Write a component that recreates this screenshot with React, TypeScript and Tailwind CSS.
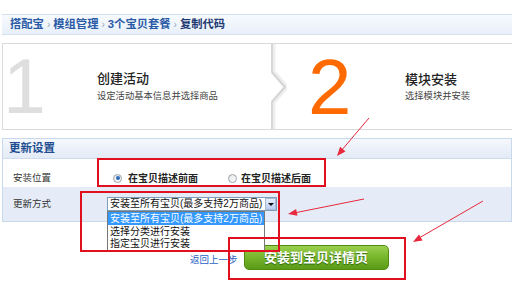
import React from "react";

function Sep() {
  return <span className="mx-[3px] text-[10px] font-normal text-[#9aa6b8]">›</span>;
}

function Radio({ checked }: { checked?: boolean }) {
  return (
    <span className="w-[9px] h-[9px] rounded-full border border-[#9aa3ad] bg-gradient-to-br from-[#e4e4e4] to-[#ffffff] flex items-center justify-center shrink-0">
      {checked ? <span className="w-[4px] h-[4px] rounded-full bg-[#2b6bbd]" /> : null}
    </span>
  );
}

export default function App() {
  return (
    <div className="relative w-[512px] h-[282px] overflow-hidden bg-white font-['Liberation_Sans','Noto_Sans_CJK_SC',sans-serif]">
      {/* breadcrumb */}
      <div className="pt-[14px] pl-[2px]">
        <div className="h-[21px] border-t border-b border-t-[#d3e1ee] border-b-[#d6e2f2] bg-gradient-to-b from-[#f7fafd] to-[#e8f0fa] flex items-center pl-[8px] text-[11.3px] font-bold text-[#2a5aa6] leading-none">
          <span>搭配宝</span>
          <Sep />
          <span>模组管理</span>
          <Sep />
          <span>3个宝贝套餐</span>
          <Sep />
          <span className="text-[#1d3a72]">复制代码</span>
        </div>
      </div>

      {/* steps */}
      <div className="mt-[8px] ml-[2px] h-[87px] border-t border-b border-l border-[#dadada] flex">
        <div className="w-[268px] flex items-center">
          <div className="w-[94px] text-[77px] leading-none text-[#dedede] font-['Liberation_Sans',sans-serif]">1</div>
          <div className="flex flex-col">
            <div className="text-[13px] leading-[16px] text-[#222] font-medium">创建活动</div>
            <div className="mt-[3px] text-[9.3px] leading-[12px] text-[#444]">设定活动基本信息并选择商品</div>
          </div>
        </div>
        <svg width="16" height="85" viewBox="0 0 16 85" className="shrink-0">
          <polyline points="2,0 2,28 15,43 2,58 2,85" fill="none" stroke="#eeeeee" strokeWidth="5" />
          <polyline points="1,0 1,28 14,43 1,58 1,85" fill="none" stroke="#cfcfcf" strokeWidth="1.5" />
        </svg>
        <div className="flex-1 flex items-center pl-[21px]">
          <div className="w-[97px] text-[78px] leading-none text-[#ff6a00] font-['Liberation_Sans',sans-serif]">2</div>
          <div className="flex flex-col">
            <div className="text-[13px] leading-[16px] text-[#222] font-medium">模块安装</div>
            <div className="mt-[2px] text-[9.3px] leading-[12px] text-[#444]">选择模块并安装</div>
          </div>
        </div>
      </div>

      {/* settings section */}
      <div className="mt-[8px] ml-[2px] border border-[#c9d8eb]">
        <div className="h-[20px] border-b border-[#cfdcee] bg-gradient-to-b from-[#f5f8fd] to-[#e3ebf7] flex items-center pl-[6px] text-[11.5px] font-bold text-[#1f4f92]">
          更新设置
        </div>
        <div className="h-[28px] bg-white flex items-end pb-[3px]">
          <div className="w-[110px] pl-[10px] text-[9.5px] leading-[12px] text-[#333]">安装位置</div>
          <div className="flex items-center h-[12px]">
            <Radio checked />
            <span className="ml-[6px] text-[10px] font-bold text-[#222]">在宝贝描述前面</span>
            <span className="ml-[30px]"><Radio /></span>
            <span className="ml-[4px] text-[10px] font-bold text-[#222]">在宝贝描述后面</span>
          </div>
        </div>
        <div className="h-[34px] bg-[#e5ecf7] flex items-center">
          <div className="w-[104px] pl-[10px] text-[9.5px] leading-[12px] text-[#333]">更新方式</div>
          <div className="w-[170px] h-[14px] border border-[#7f9db9] bg-white flex items-center">
            <span className="flex-1 pl-[2px] text-[10px] leading-[12px] text-[#111] whitespace-nowrap overflow-hidden">安装至所有宝贝(最多支持2万商品)</span>
            <span className="w-[11px] h-[12px] border border-[#aabbd6] bg-gradient-to-b from-[#e6eefc] to-[#b9cdf0] flex items-center justify-center">
              <span className="w-0 h-0 border-l-[3px] border-r-[3px] border-t-[3px] border-l-transparent border-r-transparent border-t-[#111]" />
            </span>
          </div>
        </div>
      </div>

      {/* actions */}
      <div className="mt-[23px] pl-[190px] flex items-center">
        <span className="mt-[5px] text-[9.5px] text-[#2a62c4]">返回上一步</span>
        <button className="ml-[6px] w-[145px] h-[25px] rounded-[5px] border border-[#4f8c12] bg-gradient-to-b from-[#9bd04f] via-[#76b52b] to-[#5a9a16] text-white text-[13px] font-bold [text-shadow:0_1px_1px_rgba(0,60,0,0.6)]">
          安装到宝贝详情页
        </button>
      </div>

      {/* dropdown list overlay */}
      <div className="absolute left-[107px] top-[211px] w-[158px] border border-[#777] bg-white text-[10px] text-[#111]">
        <div className="h-[13px] leading-[13px] pl-[2px] bg-[#3399ff] text-white whitespace-nowrap">安装至所有宝贝(最多支持2万商品)</div>
        <div className="h-[13px] leading-[13px] pl-[2px]">选择分类进行安装</div>
        <div className="h-[12px] leading-[12px] pl-[2px]">指定宝贝进行安装</div>
      </div>

      {/* red highlight boxes */}
      <div className="absolute left-[97px] top-[158px] w-[229px] h-[29px] border-2 border-[#e0101e]" />
      <div className="absolute left-[80px] top-[191px] w-[200px] h-[61px] border-2 border-[#e0101e]" />
      <div className="absolute left-[228px] top-[237px] w-[178px] h-[43px] border-2 border-[#e0101e]" />

      {/* arrows */}
      <svg className="absolute left-0 top-0 pointer-events-none" width="512" height="282" viewBox="0 0 512 282">
        <g stroke="#e8283c" strokeWidth="1" fill="#e8283c">
          <line x1="369" y1="118" x2="341" y2="151" />
          <polygon points="337,156 340.1,146.8 345.5,151.4" stroke="none" />
          <line x1="364" y1="199" x2="294" y2="213" />
          <polygon points="288,214 296.1,208.9 297.5,215.7" stroke="none" />
          <line x1="483" y1="201" x2="419" y2="238" />
          <polygon points="413,242 419,234.4 422.6,240.4" stroke="none" />
        </g>
      </svg>
    </div>
  );
}
